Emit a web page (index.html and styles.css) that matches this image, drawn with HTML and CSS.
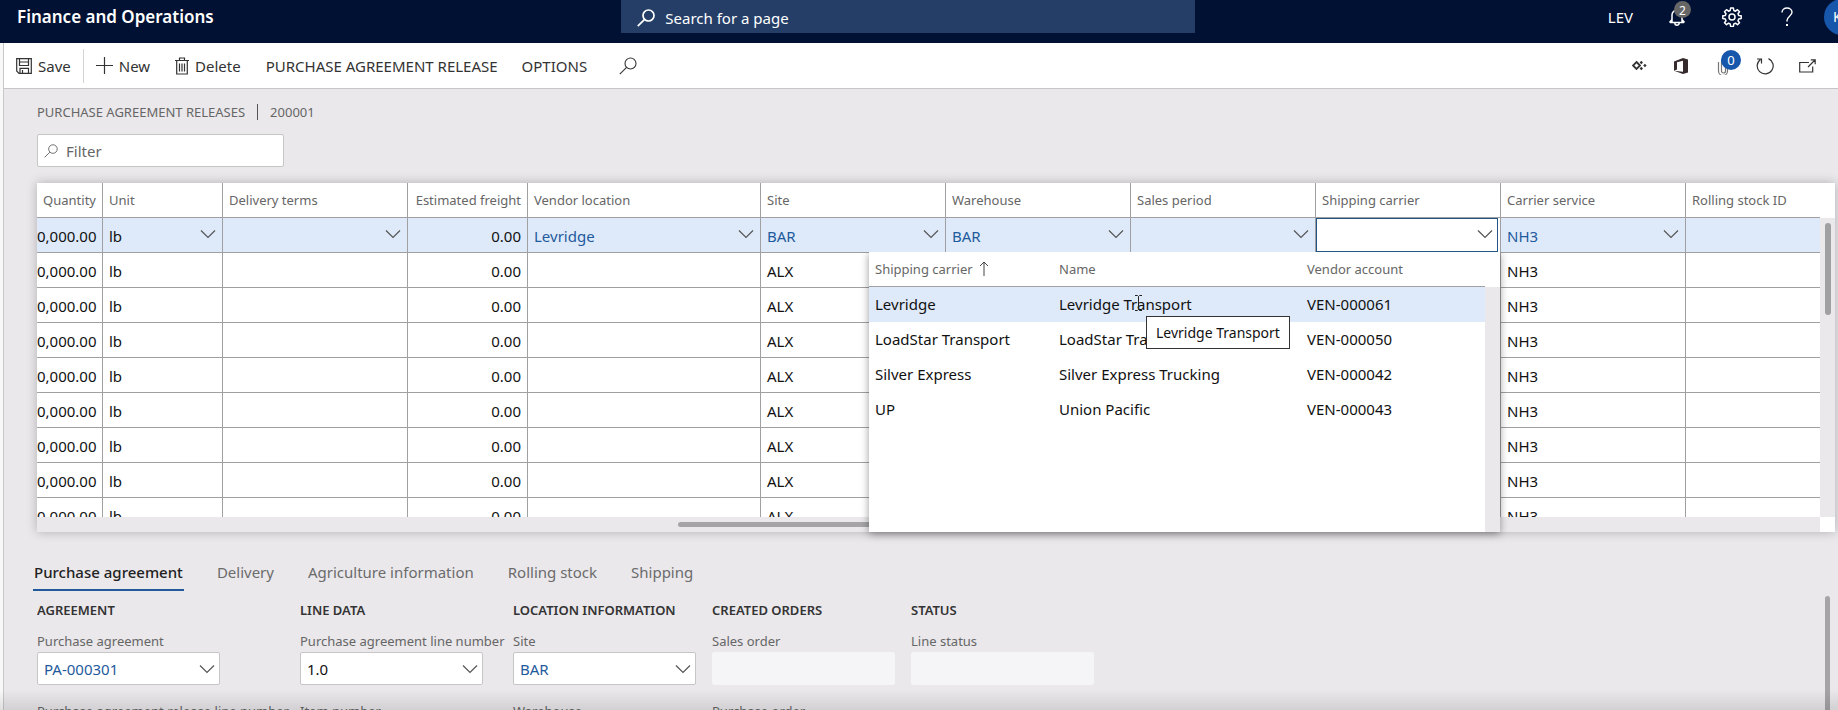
FILE: index.html
```html
<!DOCTYPE html>
<html lang="en">
<head>
<meta charset="utf-8">
<meta name="viewport" content="width=device-width, initial-scale=1">
<title>Purchase agreement releases - Finance and Operations</title>
<link rel="stylesheet" href="styles.css">
</head>
<body>
<svg class="sprite" aria-hidden="true">
  <symbol id="chevron" viewBox="0 0 16 10"><path d="M1 1.500l7 7 7-7" fill="none" stroke="currentColor" stroke-width="1.200"/></symbol>
  <symbol id="search" viewBox="0 0 18 18"><g fill="none" stroke="currentColor"><circle cx="11.500" cy="6.500" r="5.500"/><path d="M7.600 10.400L.8 17.200"/></g></symbol>
</svg>

<header class="topbar">
  <span class="brand">Finance and Operations</span>
  <label class="page-search">
    <svg class="icon-18 thick"><use href="#search"/></svg>
    <input type="text" placeholder="Search for a page" aria-label="Search for a page">
  </label>
  <nav class="top-actions" aria-label="Account">
    <button class="company">LEV</button>
    <button class="top-button" aria-label="Notifications">
      <svg width="18" height="20" viewBox="0 0 18 20" fill="none" stroke="currentColor" stroke-width="1.500"><path d="M2 15.500h14M4 15.500V8a5 5 0 0 1 10 0v7.500M6.800 16a2.200 2.200 0 0 0 4.400 0M1.500 15.500L4 12.500M16.500 15.500L14 12.500"/></svg>
      <span class="badge badge-grey">2</span>
    </button>
    <button class="top-button" aria-label="Settings">
      <svg width="20" height="20" viewBox="0 0 20 20" fill="none" stroke="currentColor" stroke-width="1.500" stroke-linejoin="round"><path d="M8.600 1h2.800l.4 2.500 1.700.7 2-1.500 2 2-1.500 2 .7 1.700 2.500.4v2.800l-2.500.4-.7 1.700 1.500 2-2 2-2-1.500-1.700.7-.4 2.500H8.600l-.4-2.500-1.700-.7-2 1.500-2-2 1.500-2-.7-1.700L.8 11.600V8.800l2.500-.4L4 6.700l-1.500-2 2-2 2 1.500 1.700-.7z"/><circle cx="10" cy="10" r="3"/></svg>
    </button>
    <button class="top-button" aria-label="Help">
      <svg width="12" height="20" viewBox="0 0 12 20" fill="none" stroke="currentColor" stroke-width="1.400"><path d="M1 5.500C1 2.800 3.200 1 6 1s5 1.700 5 4.300c0 3.700-5 4.200-5 8.200v1"/><path d="M6 17v2" stroke-width="2"/></svg>
    </button>
    <button class="avatar" aria-label="Account manager">K</button>
  </nav>
</header>

<div class="shell">
  <div class="toolbar" role="toolbar" aria-label="Actions">
    <button class="tool save">
      <svg width="16" height="16" viewBox="0 0 16 16" fill="none" stroke="currentColor" stroke-width="1.200"><path d="M.7.700h14.600v14.600H3L.7 13zM3.500.700v6.800h9V.700M4 15.300v-5h8.500v5M6.500 12v3M3.500 4h9"/></svg>
      Save
    </button>
    <button class="tool new">
      <svg width="17" height="17" viewBox="0 0 17 17" stroke="currentColor" stroke-width="1.200"><path d="M8.500 0v17M0 8.500h17"/></svg>
      New
    </button>
    <button class="tool delete">
      <svg width="14" height="18" viewBox="0 0 14 18" fill="none" stroke="currentColor" stroke-width="1.200"><path d="M0 3.500h14M4.500 3.500v-2.500h5v2.500M1.700 3.500v13.500h10.600V3.500M4.500 6.500v8M7 6.500v8M9.500 6.500v8"/></svg>
      Delete
    </button>
    <button class="tool menu">PURCHASE AGREEMENT RELEASE</button>
    <button class="tool menu">OPTIONS</button>
    <button class="tool find" aria-label="Search actions"><svg class="icon-18"><use href="#search"/></svg></button>
    <div class="tool-end">
      <button class="end-button" aria-label="Power Apps">
        <svg width="15" height="11" viewBox="0 0 15 11" fill="none" stroke="currentColor" stroke-width="1.800"><path d="M4.500 2L8 5.500 4.500 9 1 5.500z"/><path d="M9.300.8l1.700 1.700-1.700 1.700L7.600 2.500zM9.300 6.800L11 8.500l-1.700 1.700-1.700-1.700zM12.900 3.800l1.700 1.700-1.700 1.700-1.700-1.700z" fill="currentColor" stroke="none"/></svg>
      </button>
      <button class="end-button" aria-label="Open in Microsoft Office">
        <svg width="14" height="16" viewBox="0 0 14 16" fill="#352a2c"><path fill-rule="evenodd" d="M0 3.500L9 0l5 1.500v13L9 16 0 12.700l9 1V2.700L3 4.200v7.300l-3 1.200z"/></svg>
      </button>
      <button class="end-button" aria-label="Attachments">
        <svg width="12" height="18" viewBox="0 0 12 18" fill="none" stroke="#777" stroke-width="1.200"><path d="M8.500 5v9a2 2 0 0 1-4 0V4a3 3 0 0 1 6 0v10a4.300 4.300 0 0 1-9 0V5"/></svg>
        <span class="badge badge-blue">0</span>
      </button>
      <button class="end-button" aria-label="Refresh">
        <svg width="18" height="18" viewBox="0 0 18 18" fill="none" stroke="currentColor" stroke-width="1.200"><path d="M12.500 1.600A8 8 0 1 1 4.500 2.400M1 2h4.500v4.500"/></svg>
      </button>
      <button class="end-button" aria-label="Open in new window">
        <svg width="17" height="14" viewBox="0 0 17 14" fill="none" stroke="currentColor" stroke-width="1.200"><path d="M10 3.500H.7v9.500h13V7.500M9 8l7-7M11.800.8H16.200V5.200"/></svg>
      </button>
    </div>
  </div>

  <main class="page">
    <nav class="crumbs" aria-label="Breadcrumb"><a href="#">PURCHASE AGREEMENT RELEASES</a><i></i><span>200001</span></nav>
    <label class="filter">
      <svg class="icon-14"><use href="#search"/></svg>
      <input type="text" placeholder="Filter" aria-label="Filter">
    </label>

    <section class="grid" aria-label="Releases">
      <div class="viewport">
        <table class="lines">
          <colgroup><col class="w-qty"><col class="w-narrow"><col class="w-mid"><col class="w-narrow"><col class="w-wide"><col class="w-mid"><col class="w-mid"><col class="w-mid"><col class="w-mid"><col class="w-mid"><col></colgroup>
          <thead>
            <tr><th class="num">Quantity</th><th>Unit</th><th>Delivery terms</th><th class="num">Estimated freight</th><th>Vendor location</th><th>Site</th><th>Warehouse</th><th>Sales period</th><th>Shipping carrier</th><th>Carrier service</th><th>Rolling stock ID</th></tr>
          </thead>
          <tbody>
            <tr class="current">
              <td class="num">0,000.00</td>
              <td><div class="pick">lb<button aria-label="Open unit"><svg><use href="#chevron"/></svg></button></div></td>
              <td><div class="pick"><button aria-label="Open delivery terms"><svg><use href="#chevron"/></svg></button></div></td>
              <td class="num">0.00</td>
              <td><div class="pick"><a href="#">Levridge</a><button aria-label="Open vendor location"><svg><use href="#chevron"/></svg></button></div></td>
              <td><div class="pick"><a href="#">BAR</a><button aria-label="Open site"><svg><use href="#chevron"/></svg></button></div></td>
              <td><div class="pick"><a href="#">BAR</a><button aria-label="Open warehouse"><svg><use href="#chevron"/></svg></button></div></td>
              <td><div class="pick"><button aria-label="Open sales period"><svg><use href="#chevron"/></svg></button></div></td>
              <td class="editing"><div class="pick active"><input type="text" aria-label="Shipping carrier"><button aria-label="Open shipping carrier"><svg><use href="#chevron"/></svg></button></div></td>
              <td><div class="pick"><a href="#">NH3</a><button aria-label="Open carrier service"><svg><use href="#chevron"/></svg></button></div></td>
              <td></td>
            </tr>
            <tr><td class="num">0,000.00</td><td>lb</td><td></td><td class="num">0.00</td><td></td><td>ALX</td><td></td><td></td><td></td><td>NH3</td><td></td></tr>
            <tr><td class="num">0,000.00</td><td>lb</td><td></td><td class="num">0.00</td><td></td><td>ALX</td><td></td><td></td><td></td><td>NH3</td><td></td></tr>
            <tr><td class="num">0,000.00</td><td>lb</td><td></td><td class="num">0.00</td><td></td><td>ALX</td><td></td><td></td><td></td><td>NH3</td><td></td></tr>
            <tr><td class="num">0,000.00</td><td>lb</td><td></td><td class="num">0.00</td><td></td><td>ALX</td><td></td><td></td><td></td><td>NH3</td><td></td></tr>
            <tr><td class="num">0,000.00</td><td>lb</td><td></td><td class="num">0.00</td><td></td><td>ALX</td><td></td><td></td><td></td><td>NH3</td><td></td></tr>
            <tr><td class="num">0,000.00</td><td>lb</td><td></td><td class="num">0.00</td><td></td><td>ALX</td><td></td><td></td><td></td><td>NH3</td><td></td></tr>
            <tr><td class="num">0,000.00</td><td>lb</td><td></td><td class="num">0.00</td><td></td><td>ALX</td><td></td><td></td><td></td><td>NH3</td><td></td></tr>
            <tr><td class="num">0,000.00</td><td>lb</td><td></td><td class="num">0.00</td><td></td><td>ALX</td><td></td><td></td><td></td><td>NH3</td><td></td></tr>
          </tbody>
        </table>
      </div>
      <div class="track-y"><div class="thumb-y"></div></div>
      <div class="track-x"><div class="thumb-x"></div></div>

      <div class="lookup">
        <table class="options">
          <colgroup><col class="w-code"><col class="w-name"><col></colgroup>
          <thead>
            <tr><th>Shipping carrier<svg class="sort" viewBox="0 0 10 15" fill="none" stroke="currentColor"><path d="M5 15V1M1 5l4-4 4 4"/></svg></th><th>Name</th><th>Vendor account</th></tr>
          </thead>
          <tbody>
            <tr class="current"><td>Levridge</td><td>Levridge Transport</td><td>VEN-000061</td></tr>
            <tr><td>LoadStar Transport</td><td>LoadStar Transport</td><td>VEN-000050</td></tr>
            <tr><td>Silver Express</td><td>Silver Express Trucking</td><td>VEN-000042</td></tr>
            <tr><td>UP</td><td>Union Pacific</td><td>VEN-000043</td></tr>
          </tbody>
        </table>
        <div class="lookup-track"></div>
        <div class="tooltip" role="tooltip">Levridge Transport</div>
        <svg class="caret" viewBox="0 0 9 16" fill="none" stroke="#222"><path d="M1 .5h2.500l1 1 1-1H8M4.500 1.500v13M1 15.500h2.500l1-1 1 1H8"/></svg>
      </div>
    </section>

    <div class="tabs" role="tablist">
      <button role="tab" aria-selected="true">Purchase agreement</button>
      <button role="tab">Delivery</button>
      <button role="tab">Agriculture information</button>
      <button role="tab">Rolling stock</button>
      <button role="tab">Shipping</button>
    </div>

    <form class="details">
      <section class="group group-first">
        <h2>AGREEMENT</h2>
        <label for="agreement">Purchase agreement</label>
        <div class="combo"><input id="agreement" class="link" value="PA-000301"><button type="button" aria-label="Open purchase agreement"><svg><use href="#chevron"/></svg></button></div>
        <label for="release-line">Purchase agreement release line number</label>
        <div class="combo"><input id="release-line"></div>
      </section>
      <section class="group group-second">
        <h2>LINE DATA</h2>
        <label for="line-number">Purchase agreement line number</label>
        <div class="combo"><input id="line-number" value="1.0"><button type="button" aria-label="Open line number"><svg><use href="#chevron"/></svg></button></div>
        <label for="item">Item number</label>
        <div class="combo"><input id="item"></div>
      </section>
      <section class="group">
        <h2>LOCATION INFORMATION</h2>
        <label for="site">Site</label>
        <div class="combo"><input id="site" class="link" value="BAR"><button type="button" aria-label="Open site"><svg><use href="#chevron"/></svg></button></div>
        <label for="warehouse">Warehouse</label>
        <div class="combo"><input id="warehouse"></div>
      </section>
      <section class="group">
        <h2>CREATED ORDERS</h2>
        <label for="sales-order">Sales order</label>
        <div class="combo locked"><input id="sales-order" readonly></div>
        <label for="purchase-order">Purchase order</label>
        <div class="combo locked"><input id="purchase-order" readonly></div>
      </section>
      <section class="group">
        <h2>STATUS</h2>
        <label for="line-status">Line status</label>
        <div class="combo locked"><input id="line-status" readonly></div>
      </section>
      <div class="page-thumb"></div>
    </form>
  </main>
</div>
<div class="fade"></div>
</body>
</html>
```

FILE: styles.css
```css
* { box-sizing: border-box; }

body {
  margin: 0;
  height: 100vh;
  overflow: hidden;
  display: flex;
  flex-direction: column;
  background: #f8f8f8;
  color: #111;
  font: 15px/20px "Segoe UI", "Noto Sans", sans-serif;
}

button, input { font: inherit; color: inherit; background: none; border: 0; padding: 0; margin: 0; }
input { min-width: 0; outline: 0; }
svg { display: block; flex: none; }
a { color: inherit; text-decoration: none; }
.sprite { position: absolute; width: 0; height: 0; }
.icon-18 { width: 18px; height: 18px; stroke-width: 1.1px; }
.icon-14 { width: 14px; height: 14px; stroke-width: 1.2px; }
.thick { stroke-width: 1.7px; }

/* Top bar */
.topbar {
  flex: none;
  height: 43px;
  display: grid;
  grid-template-columns: 10fr 574px 11fr;
  align-items: start;
  padding-left: 17px;
  margin-right: -22px;
  background: #001133;
  color: #fff;
}
.brand { padding-top: 7px; font-size: 17px; font-weight: 600; }
.page-search {
  height: 33px;
  display: flex;
  align-items: center;
  gap: 10px;
  padding: 2px 16px 0;
  background: #253e67;
}
.page-search input { flex: 1; }
.page-search input::placeholder { color: #fff; opacity: 1; }
.top-actions { display: flex; justify-content: flex-end; align-items: center; height: 34px; }
.company { margin-right: 16px; }
.top-button { position: relative; width: 55px; height: 32px; display: grid; place-items: center; }
.avatar { width: 36px; height: 36px; margin: 0 0 0 10px; padding-left: 9px; border-radius: 50%; background: #1757ab; font-size: 14px; text-align: left; }

.badge { position: absolute; display: grid; place-items: center; border-radius: 50%; color: #fff; }
.badge-grey { width: 17px; height: 17px; left: 25px; top: 0; background: #666; font-size: 12px; }
.badge-blue { width: 20px; height: 20px; left: 19px; top: 1px; background: #1757ab; font-size: 13px; }

/* Toolbar */
.shell { flex: 1; min-height: 0; margin-left: 3px; border-left: 1px solid #c8c8c8; display: flex; flex-direction: column; }
.toolbar { flex: none; height: 46px; display: flex; align-items: center; background: #fff; border-bottom: 1px solid #c6c6c6; color: #333; }
.tool { display: flex; align-items: center; gap: 6px; height: 34px; }
.save { padding: 0 12px; border-right: 1px solid #d4d4d4; }
.new { padding-left: 12px; }
.delete { padding: 0 13px 0 25px; }
.menu { padding: 0 12px; }
.find { padding-left: 20px; }
.tool-end { flex: 1; display: flex; justify-content: flex-end; padding-right: 10px; }
.end-button { position: relative; width: 42px; height: 34px; display: grid; place-items: center; }

/* Page */
.page { flex: 1; min-height: 0; display: flex; flex-direction: column; align-items: stretch; padding: 13px 3px 0 33px; background: #eae8eb; }
.crumbs { display: flex; align-items: center; gap: 12px; font-size: 13px; color: #666; }
.crumbs i { width: 1px; height: 16px; background: #555; }
.filter {
  flex: none;
  width: 247px;
  height: 33px;
  margin: 12px 0 16px;
  display: flex;
  align-items: center;
  gap: 8px;
  padding: 0 6px;
  background: #fff;
  border: 1px solid #c6c6c6;
  border-radius: 2px;
  color: #666;
}
.filter input { flex: 1; }
.filter input::placeholder { color: #666; opacity: 1; }

/* Grid */
.grid {
  flex: none;
  position: relative;
  display: grid;
  grid-template-columns: minmax(0, 1fr) 15px;
  grid-template-rows: 334px 15px;
  background: #fff;
  box-shadow: 0 0 10px rgba(0, 0, 0, .25);
}
.viewport { overflow: hidden; }
table { width: 100%; table-layout: fixed; border-spacing: 0; }
.w-qty { width: 66px; }
.w-narrow { width: 120px; }
.w-mid { width: 185px; }
.w-wide { width: 233px; }
.w-code { width: 184px; }
.w-name { width: 248px; }
th { height: 35px; padding: 0 6px; font-size: 13px; font-weight: 400; color: #666; text-align: left; white-space: nowrap; border-bottom: 1px solid #a0a0a3; }
td { height: 35px; padding: 1px 6px 0; white-space: nowrap; }
.lines th, .lines td { border-right: 1px solid #a0a0a3; border-bottom: 1px solid #a0a0a3; }
.lines th:last-child, .lines td:last-child { border-right: 0; }
.lines .num { text-align: right; padding-left: 0; }
.current td { background: #deeafa; }
.current a, .link { color: #1f5a9c; }
.pick { display: flex; align-items: center; }
.pick button { margin-left: auto; height: 20px; padding-bottom: 3px; }
.pick svg, .combo svg { width: 16px; height: 10px; color: #555; }
.lines .editing { padding: 0 2px 0 0; background: #fff; }
.active { height: 34px; padding: 0 4px 0 5px; border: 1px solid #205586; background: #fff; }
.active input { flex: 1; }

.track-y { margin-top: 35px; padding: 5px 4px 0 5px; background: #eae8eb; }
.thumb-y { height: 92px; border-radius: 3px; background: #a0a0a2; }
.track-x { padding: 5px 0 0 641px; background: #eae8eb; }
.thumb-x { width: 400px; height: 5px; border-radius: 3px; background: #a5a5a7; }

/* Lookup list */
.lookup {
  position: absolute;
  top: 69px;
  bottom: 0;
  left: 832px;
  width: 631px;
  display: grid;
  grid-template-columns: 1fr 15px;
  align-items: start;
  background: #fff;
  box-shadow: 0 2px 8px rgba(0, 0, 0, .4);
  clip-path: inset(0 -12px -12px -12px);
}
.options td { padding: 0 6px 1px; }
.sort { display: inline-block; width: 10px; height: 15px; margin-left: 6px; vertical-align: -2px; color: #444; }
.lookup-track { align-self: stretch; margin-top: 35px; background: #eae8eb; }
.tooltip { position: absolute; left: 277px; top: 64px; height: 33px; padding: 6px 9px; border: 1px solid #333; background: #fff; font-size: 14px; white-space: nowrap; }
.caret { position: absolute; left: 265px; top: 43px; width: 9px; height: 16px; }

/* Tabs */
.tabs { flex: none; display: flex; gap: 32px; margin: 27px 0 0 -4px; color: #6b6b6b; }
.tabs button { height: 32px; padding: 0 1px 4px; border-bottom: 2px solid transparent; }
.tabs [aria-selected="true"] { color: #222; font-weight: 500; border-color: #205a9b; }

/* Detail fields */
.details { flex: 1; min-height: 0; display: flex; align-items: flex-start; gap: 16px; overflow: hidden; }
.group { flex: none; width: 183px; display: flex; flex-direction: column; }
.group-first { width: 247px; }
.group-second { width: 197px; }
.group h2 { margin: 9px 0 11px; font-size: 13px; font-weight: 600; color: #333; white-space: nowrap; }
.group label { font-size: 13px; color: #666; white-space: nowrap; }
.combo { width: 183px; height: 33px; margin: 1px 0 16px; display: flex; align-items: center; padding: 0 4px 0 6px; background: #fff; border: 1px solid #c6c6c6; border-radius: 2px; }
.combo input { flex: 1; }
.locked { background: #f5f4f7; border-color: #f5f4f7; }
.page-thumb { align-self: stretch; width: 5px; margin: 5px 5px 0 auto; border-radius: 3px 3px 0 0; background: #a5a5a7; }

.fade { position: fixed; left: 0; right: 0; bottom: 0; height: 20px; background: linear-gradient(rgba(0, 0, 0, 0), rgba(0, 0, 0, .1)); pointer-events: none; }
```
